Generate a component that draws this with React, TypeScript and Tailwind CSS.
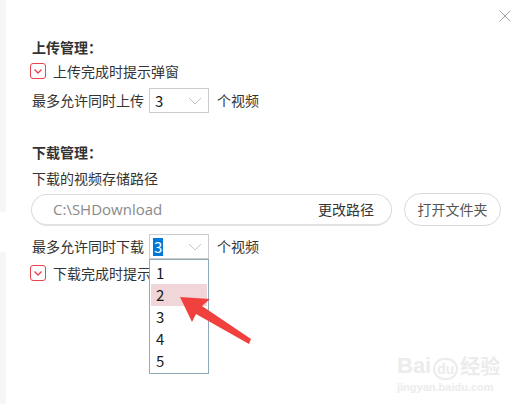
import React from 'react';

const font = { fontFamily: '"Noto Sans CJK SC", "Noto Sans", sans-serif' };

function Check() {
  return (
    <div className="flex h-4 w-4 shrink-0 items-center justify-center rounded-[3px] border border-[#e8434f] bg-white">
      <svg width="10" height="7" viewBox="0 0 10 7">
        <path d="M1.5 1.5 L5 5 L8.5 1.5" fill="none" stroke="#e8434f" strokeWidth="1.4" />
      </svg>
    </div>
  );
}

function Chevron() {
  return (
    <svg width="14" height="8" viewBox="0 0 14 8" className="mr-[6px]">
      <path d="M1 1 L7 7 L13 1" fill="none" stroke="#c4c4c4" strokeWidth="1" />
    </svg>
  );
}

function Select({ open }: { open?: boolean }) {
  return (
    <div className="relative">
      <div className="flex h-[25px] w-[60px] items-center justify-between border border-[#cccccc] bg-white">
        {open ? (
          <span className="ml-[3px] bg-[#0078d7] px-[1px] text-[15px] leading-[18px] text-white">3</span>
        ) : (
          <span className="ml-[5px] text-[15px] leading-[18px] text-[#1a1a1a]">3</span>
        )}
        <Chevron />
      </div>
      {open && (
        <ul className="absolute left-0 top-[25px] z-10 flex h-[115px] w-[60px] flex-col border border-[#8eaabb] bg-white px-[1px] pt-[2px] text-[15px] text-[#1a1a1a]">
          {['1', '2', '3', '4', '5'].map((n) => (
            <li
              key={n}
              className={`flex h-[22px] items-center pl-[5px] ${n === '2' ? 'bg-[#f0d6d8]' : ''}`}
            >
              {n}
            </li>
          ))}
        </ul>
      )}
    </div>
  );
}

export default function App() {
  return (
    <div className="relative flex h-[404px] w-[519px] overflow-hidden bg-white text-[14px] text-[#333333]" style={font}>
      <div className="flex w-[6px] flex-col">
        <div className="h-[212px] bg-[#f6f6f6]" />
        <div className="h-[40px] bg-white" />
        <div className="flex-1 bg-[#f6f6f6]" />
      </div>

      <div className="flex flex-1 flex-col pl-[24px] pt-[37px]">
        <div className="ml-[2px] flex h-5 items-center font-bold">上传管理：</div>

        <div className="mt-[6px] flex h-4 items-center gap-[7px]">
          <Check />
          <span>上传完成时提示弹窗</span>
        </div>

        <div className="mt-[9px] ml-[2px] flex h-[25px] items-center">
          <span className="w-[117px]">最多允许同时上传</span>
          <Select />
          <span className="ml-[8px]">个视频</span>
        </div>

        <div className="mt-[29px] ml-[2px] flex h-5 items-center font-bold">下载管理：</div>

        <div className="mt-[6px] ml-[2px] flex h-5 items-center">下载的视频存储路径</div>

        <div className="mt-[5px] ml-[1px] flex h-[33px] items-center gap-[12px]">
          <div className="flex h-[32px] w-[361px] items-center justify-between rounded-full border border-[#dcdcdc] border-b-[2px] border-b-[#e2e2e2] pl-[21px] pr-[17px]">
            <span className="text-[15px] text-[#8a8a8a]" style={{ fontFamily: '"Open Sans", sans-serif' }}>
              C:\SHDownload
            </span>
            <span className="text-[#333333]">更改路径</span>
          </div>
          <div className="flex h-[33px] w-[97px] items-center justify-center rounded-full border border-[#d8d8d8] text-[#555555]">
            打开文件夹
          </div>
        </div>

        <div className="relative z-10 mt-[8px] ml-[2px] flex h-[25px] items-center">
          <span className="w-[117px]">最多允许同时下载</span>
          <Select open />
          <span className="ml-[8px]">个视频</span>
        </div>

        <div className="mt-[6px] flex h-4 items-center gap-[7px]">
          <Check />
          <span className="w-[96px] overflow-hidden whitespace-nowrap">下载完成时提示弹窗</span>
        </div>
      </div>

      <svg className="absolute right-[8px] top-[10px]" width="12" height="12" viewBox="0 0 12 12">
        <path d="M0.5 0.5 L11.5 11.5 M11.5 0.5 L0.5 11.5" stroke="#a0a0a0" strokeWidth="1" />
      </svg>

      <svg className="absolute left-0 top-0 z-20" width="519" height="404" viewBox="0 0 519 404">
        <polygon
          points="180,297 210,299 202,306 251,339 249,344 196,314 192,322"
          fill="#f0413f"
        />
      </svg>

      <div className="absolute left-[397px] top-[352px] flex flex-col text-[#ececec]" style={{ fontFamily: '"Liberation Sans", sans-serif' }}>
        <div className="flex items-end text-[22px] font-bold leading-[28px]">
          Bai<span className="mx-[2px] rounded-full border-2 border-[#ececec] px-[2px] text-[14px] leading-[18px]">du</span>
          <span style={font} className="text-[20px]">经验</span>
        </div>
        <div className="text-[11px] font-bold leading-[14px]">jingyan.baidu.com</div>
      </div>
    </div>
  );
}
